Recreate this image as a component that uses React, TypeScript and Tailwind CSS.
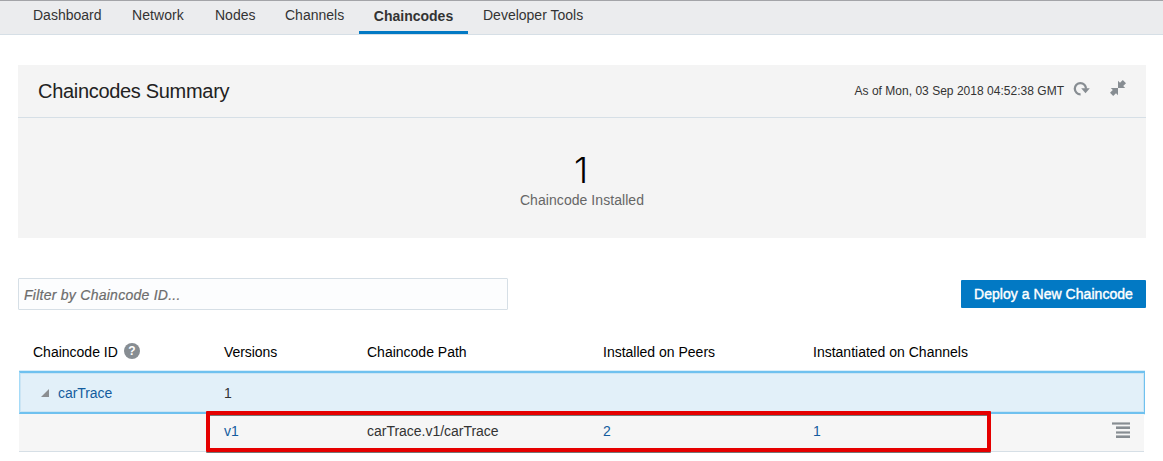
import { useState } from "react";

const tabs = [
  { name: "Dashboard", cell: "w-[99px]" },
  { name: "Network", cell: "w-[83px] tracking-[0.06px]" },
  { name: "Nodes", cell: "w-[70px]" },
  { name: "Channels", cell: "w-[74px]" },
  { name: "Chaincodes", cell: "w-[109px]" },
  { name: "Developer Tools", cell: "w-[140px]" },
];

function RefreshIcon() {
  return (
    <svg width="18" height="16" viewBox="0 0 18 16" className="block">
      <path d="M7.6 13.3 A5.6 5.6 0 1 1 13 7.8" fill="none" stroke="#878d92" strokeWidth="2.3" />
      <path d="M8.2 7.2 H16.8 L12.5 12.2 Z" fill="#878d92" />
    </svg>
  );
}

function CollapseIcon() {
  return (
    <svg width="16" height="16" viewBox="0 0 16 16" className="block" fill="#878d92">
      <path d="M8 8 V0.8 L10 2.8 L12.8 0 L16 3.2 L13.2 6 L15.2 8 Z" />
      <path d="M8 8 V15.2 L6 13.2 L3.2 16 L0 12.8 L2.8 10 L0.8 8 Z" />
    </svg>
  );
}

function MenuIcon() {
  return (
    <svg width="18" height="16" viewBox="0 0 18 16" className="block" shapeRendering="crispEdges">
      <path d="M0 0h18v3H0zM4 4h14v3H4zM4 9h14v3H4zM4 13h14v3H4z" fill="#b4b8bb" />
      <path d="M0 1h18v1H0zM4 5h14v2H4zM4 10h14v1H4zM4 14h14v2H4z" fill="#878d92" />
    </svg>
  );
}

export default function App() {
  const [filter, setFilter] = useState("");
  return (
    <div className="h-[461px] w-[1163px] overflow-hidden bg-white font-['Liberation_Sans',Arial,sans-serif] text-sm text-[#333]">
      <nav className="flex h-[35px] border-t border-b border-t-[#a3a4a8] border-b-[#d6dfe6] bg-[#ebecee] pl-[33px]">
        {tabs.map((tab) =>
          tab.name === "Chaincodes" ? (
            <a key={tab.name} className={`${tab.cell} flex h-[33px] justify-center border-b-3 border-[#0279c4] pt-[5px] font-bold whitespace-nowrap`}>
              {tab.name}
            </a>
          ) : (
            <a key={tab.name} className={`${tab.cell} pt-1 whitespace-nowrap ${tab.name === "Developer Tools" ? "ml-[15px]" : ""}`}>
              {tab.name}
            </a>
          ),
        )}
      </nav>

      <main className="mt-[30px] ml-[18px] w-[1128px]">
        <section className="h-[173px] bg-[#f4f4f4]">
          <header className="flex h-[53px] items-center justify-between border-b border-[#d6dfe6] pr-5 pl-5">
            <h1 className="text-[20px] leading-6 tracking-[-0.31px] text-[#222]">Chaincodes Summary</h1>
            <div className="flex items-center text-xs tracking-[0.02px]">
              <span className="mr-[9px]">As of Mon, 03 Sep 2018 04:52:38 GMT</span>
              <span className="mr-[19px] -mt-[5px]"><RefreshIcon /></span>
              <span className="-mt-[6px]"><CollapseIcon /></span>
            </div>
          </header>
          <div className="flex flex-col items-center pt-8">
            <div className="pr-[2px] font-[Inter,sans-serif] text-[36px] leading-10 font-light text-black">1</div>
            <div className="h-5 leading-5 tracking-[0.06px] text-[#666]">Chaincode Installed</div>
          </div>
        </section>

        <div className="mt-10 flex h-8 items-center justify-between">
          <input
            value={filter}
            onChange={(event) => setFilter(event.target.value)}
            placeholder="Filter by Chaincode ID..."
            className="h-8 w-[490px] rounded-[1px] border border-[#d6dfe6] bg-[#fcfdfe] px-[5px] pt-px text-sm tracking-[0.26px] italic outline-none placeholder:text-[#6c6c6c] [-webkit-text-stroke:0.2px]"
          />
          <button className="h-7 w-[185px] rounded-[1px] bg-[#0279c4] text-sm tracking-[0.04px] text-white [-webkit-text-stroke:0.4px_white]">
            Deploy a New Chaincode
          </button>
        </div>

        <div className="ml-px w-[1126px]">
          <div className="grid h-[61px] grid-cols-[205px_143px_236px_210px_1fr] pt-8 text-black">
            <div className="flex h-5 items-center pl-[14px]">
              Chaincode ID
              <span className="mt-[-2px] ml-[6px] flex size-4 items-center justify-center rounded-full bg-[#878d92] text-xs leading-none font-bold text-white">?</span>
            </div>
            <div className="leading-5 tracking-[-0.08px]">Versions</div>
            <div className="leading-5">Chaincode Path</div>
            <div className="leading-5">Installed on Peers</div>
            <div className="leading-5">Instantiated on Channels</div>
          </div>

          <div className="grid h-[43px] grid-cols-[205px_143px_236px_210px_1fr] items-center border-x border-y-2 border-x-[#a5dbf8] border-y-[#6fc1ef] border-r-[#6fc1ef] bg-[#e2f0f9] shadow-[0_1px_0_#d9eefa,0_-1px_0_#d9eefa,inset_0_0_0_1px_#cce5f4]">
            <div className="flex items-center pl-[21px] tracking-[-0.06px] text-[#145c9e]">
              <svg width="8" height="8" viewBox="0 0 8 8" className="mr-[9px]"><path d="M8 0V8H0Z" fill="#8b8e91" /></svg>
              carTrace
            </div>
            <div className="-ml-px">1</div>
          </div>

          <div className="relative grid h-[38px] w-[1125px] grid-cols-[205px_143px_236px_210px_1fr_41px] items-center border-b border-[#d6dfe6] bg-[#f6f6f6] pb-[3px]">
            <div />
            <div className="text-[#145c9e]">v1</div>
            <div className="tracking-[-0.02px]">carTrace.v1/carTrace</div>
            <div className="text-[#145c9e]">2</div>
            <div className="text-[#145c9e]">1</div>
            <div className="-mt-[2px] pl-[9px]"><MenuIcon /></div>
            <div className="pointer-events-none absolute -top-[3px] left-[187px] h-[41px] w-[785px] rounded-[1px] border-4 border-[#e50000] shadow-[0_1px_0_#777,inset_0_1px_0_#777]" />
          </div>
        </div>
      </main>
    </div>
  );
}
